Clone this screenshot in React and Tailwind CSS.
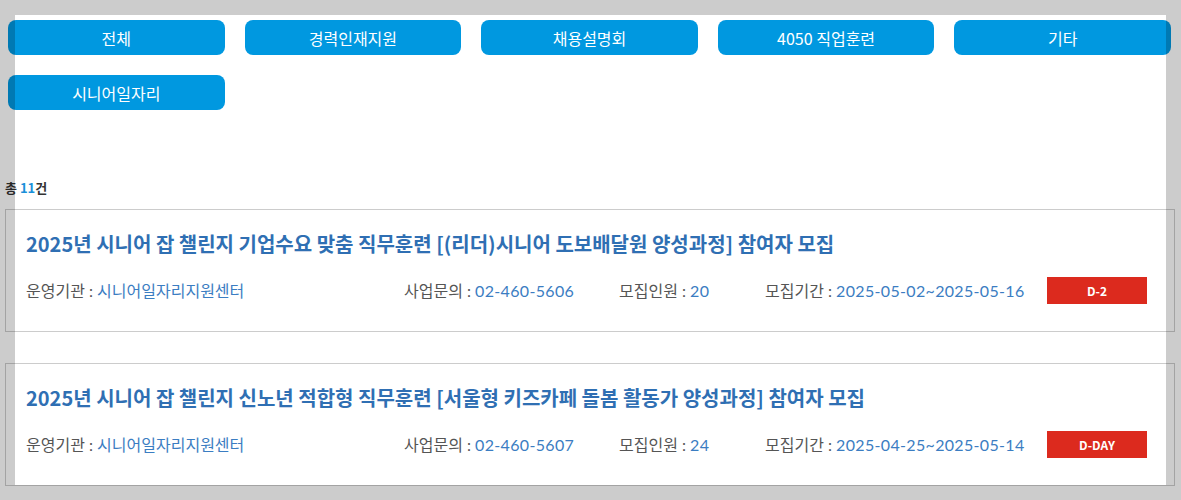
const categories = ['전체', '경력인재지원', '채용설명회', '4050 직업훈련', '기타', '시니어일자리'];

const posts = [
  {
    title: '2025년 시니어 잡 챌린지 기업수요 맞춤 직무훈련 [(리더)시니어 도보배달원 양성과정] 참여자 모집',
    org: '시니어일자리지원센터',
    phone: '02-460-5606',
    count: '20',
    period: '2025-05-02~2025-05-16',
    dday: 'D-2',
  },
  {
    title: '2025년 시니어 잡 챌린지 신노년 적합형 직무훈련 [서울형 키즈카페 돌봄 활동가 양성과정] 참여자 모집',
    org: '시니어일자리지원센터',
    phone: '02-460-5607',
    count: '24',
    period: '2025-04-25~2025-05-14',
    dday: 'D-DAY',
  },
];

function Info({ label, value, numeric = false, className = '' }) {
  return (
    <div className={`whitespace-nowrap ${className}`}>
      <span className="text-[#555555]">{label} : </span>
      <span className={numeric ? 'text-[#3b7dc2] tracking-[0.33px]' : 'text-[#3b7dc2]'}>{value}</span>
    </div>
  );
}

export default function App() {
  return (
    <div className="relative w-[1181px] h-[500px] bg-white overflow-hidden font-['Lato','Noto_Sans_CJK_KR',sans-serif]">
      {/* Category buttons */}
      <div className="grid grid-cols-5 gap-x-5 gap-y-5 pt-5 pl-2 pr-[10px]">
        {categories.map((c) => (
          <button
            key={c}
            type="button"
            className="h-[35px] rounded-lg bg-[#0098e0] text-white text-[16px] font-['Noto_Sans_CJK_KR',sans-serif]"
          >
            {c}
          </button>
        ))}
      </div>

      {/* Total */}
      <p className="mt-[70px] ml-[5px] text-[13px] font-bold text-[#333333] leading-[16px] font-['Noto_Sans_CJK_KR',sans-serif]">
        총 <span className="text-[#1a90d9]">11</span>건
      </p>

      {/* List */}
      <div className="mt-[13px] ml-[5px] w-[1170px] flex flex-col gap-[31px]">
        {posts.map((p) => (
          <div key={p.phone} className="h-[123px] border border-[#cccccc] pt-[22px] pl-5 pr-[27px]">
            <h3 className="text-[20px] leading-[24px] font-bold text-[#2f6fb3] font-['Noto_Sans_CJK_KR',sans-serif]">
              {p.title}
            </h3>
            <div className="mt-[21px] flex items-center text-[16px] h-[27px]">
              <Info label="운영기관" value={p.org} className="w-[378px]" />
              <Info label="사업문의" value={p.phone} numeric className="w-[215px]" />
              <Info label="모집인원" value={p.count} numeric className="w-[146px]" />
              <Info label="모집기간" value={p.period} numeric />
              <span className="ml-auto w-[100px] h-[27px] flex items-center justify-center bg-[#dc2a1e] text-white text-[12px] font-bold font-['Noto_Sans_CJK_KR',sans-serif]">
                {p.dday}
              </span>
            </div>
          </div>
        ))}
      </div>

      {/* Gray frame overlay */}
      <div className="absolute left-0 top-0 w-full h-[15px] bg-black/20" />
      <div className="absolute left-0 bottom-0 w-full h-[15px] bg-black/20" />
      <div className="absolute left-0 top-[15px] w-[15px] h-[470px] bg-black/20" />
      <div className="absolute right-0 top-[15px] w-[15px] h-[470px] bg-black/20" />
    </div>
  );
}
